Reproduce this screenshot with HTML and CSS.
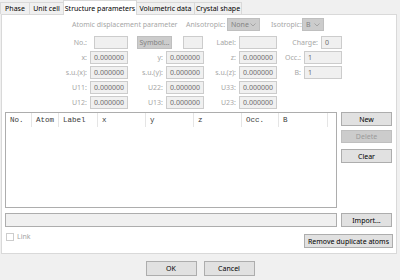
FILE: index.html
```html
<!DOCTYPE html>
<html>
<head>
<meta charset="utf-8">
<link rel="stylesheet" href="styles.css">
</head>
<body>
<div class="dlg">
  <div class="tabs">
    <div class="tab w-phase">Phase</div>
    <div class="tab w-unit">Unit cell</div>
    <div class="tab w-struct active">Structure parameters</div>
    <div class="tab w-vol">Volumetric data</div>
    <div class="tab w-cry">Crystal shape</div>
  </div>
  <div class="panel">
    <div class="adp">
      <span class="dis adp-title">Atomic displacement parameter</span>
      <span class="dis aniso-l">Anisotropic:</span>
      <span class="combo combo-none">None<svg class="chev" width="6" height="4" viewBox="0 0 6 4"><polyline points="0.5,0.5 3,3 5.5,0.5" fill="none" stroke="#9a9a9a" stroke-width="0.8"/></svg></span>
      <span class="dis iso-l">Isotropic:</span>
      <span class="combo combo-b">B<svg class="chev" width="6" height="4" viewBox="0 0 6 4"><polyline points="0.5,0.5 3,3 5.5,0.5" fill="none" stroke="#9a9a9a" stroke-width="0.8"/></svg></span>
    </div>
    <div class="form">
      <span class="lbl">No.:</span>
      <span class="inp inp-no"></span>
      <span class="sym-cell"><span class="btn-dis sym">Symbol...</span><span class="inp inp-small"></span></span>
      <span class="lbl">Label:</span>
      <span class="inp"></span>
      <span class="charge-cell"><span class="lbl-i">Charge:</span><span class="inp inp-charge">0</span></span>

      <span class="lbl">x:</span><span class="inp">0.000000</span>
      <span class="lbl">y:</span><span class="inp">0.000000</span>
      <span class="lbl">z:</span><span class="inp">0.000000</span>
      <span class="lbl">Occ.:</span><span class="inp">1</span>

      <span class="lbl">s.u.(x):</span><span class="inp">0.000000</span>
      <span class="lbl">s.u.(y):</span><span class="inp">0.000000</span>
      <span class="lbl">s.u.(z):</span><span class="inp">0.000000</span>
      <span class="lbl">B:</span><span class="inp">1</span>

      <span class="lbl">U11:</span><span class="inp">0.000000</span>
      <span class="lbl">U22:</span><span class="inp">0.000000</span>
      <span class="lbl">U33:</span><span class="inp">0.000000</span>
      <span></span><span></span>

      <span class="lbl">U12:</span><span class="inp">0.000000</span>
      <span class="lbl">U13:</span><span class="inp">0.000000</span>
      <span class="lbl">U23:</span><span class="inp">0.000000</span>
      <span></span><span></span>
    </div>
    <div class="atoms">
      <div class="table">
        <div class="thead">
          <span class="th c-no">No.</span>
          <span class="th c-atom">Atom</span>
          <span class="th c-label">Label</span>
          <span class="th c-x">x</span>
          <span class="th c-y">y</span>
          <span class="th c-z">z</span>
          <span class="th c-occ">Occ.</span>
          <span class="th c-b">B</span>
        </div>
      </div>
      <div class="side">
        <button class="btn">New</button>
        <button class="btn btn-off b-del">Delete</button>
        <button class="btn b-clear">Clear</button>
      </div>
    </div>
    <div class="import">
      <div class="path"></div>
      <button class="btn b-imp">Import...</button>
    </div>
    <div class="foot">
      <span class="chk"><span class="box"></span><span class="dis">Link</span></span>
      <button class="btn b-rem">Remove duplicate atoms</button>
    </div>
  </div>
  <div class="actions">
    <button class="btn b-ok">OK</button>
    <button class="btn b-ok">Cancel</button>
  </div>
</div>
</body>
</html>
```
FILE: styles.css
```css
* { box-sizing: border-box; }
html, body { margin: 0; padding: 0; }
body {
  background: #f0f0f0;
  font-family: "Noto Sans", "Open Sans", sans-serif;
  font-size: 7px;
  color: #000;
  white-space: nowrap;
}
.dlg { width: 400px; height: 280px; }

.tabs { display: flex; height: 14px; align-items: flex-end; position: relative; z-index: 2; }
.tab {
  height: 12px;
  border: 1px solid #d9d9d9;
  border-bottom: none;
  margin-right: -1px;
  background: #f0f0f0;
  display: flex; align-items: center; justify-content: center;
  line-height: 1;
}
.tab.active { height: 15px; background: #fff; margin-bottom: -1px; position: relative; }
.w-phase { width: 30px; }
.w-unit { width: 35px; }
.w-struct { width: 74px; }
.w-vol { width: 59px; }
.w-cry { width: 48px; }

.panel {
  margin-left: 1px;
  width: 396px;
  height: 240px;
  background: #fff;
  border: 1px solid #d9d9d9;
  padding: 2px 3px 0 3px;
}

.dis { color: #a6a6a6; }

.adp { display: flex; align-items: center; height: 14px; }
.adp-title { margin-left: 67px; width: 102px; text-align: center; }
.aniso-l { margin-left: 12px; width: 40px; }
.iso-l { margin-left: 11px; width: 31px; }
.combo {
  height: 13px;
  background: #cccccc;
  border: 1px solid #bfbfbf;
  color: #838383;
  display: flex; align-items: center;
  padding-left: 3px;
  position: relative;
}
.combo .chev { position: absolute; right: 3px; top: 4px; }
.combo-none { width: 33px; margin-left: 1px; }
.combo-b { width: 22px; }

.form {
  margin-top: 5px;
  display: grid;
  grid-template-columns: 85px 38px 38px 38px 35px 38px 27px 38px;
  grid-auto-rows: 13px;
  row-gap: 2px;
}
.lbl { color: #a6a6a6; text-align: right; padding-right: 3px; display: flex; align-items: center; justify-content: flex-end; }
.inp {
  background: #f0f0f0;
  border: 1px solid #cccccc;
  color: #6d6d6d;
  display: flex; align-items: center;
  padding-left: 3px;
}
.inp-no { margin-left: 4px; }
.sym-cell { grid-column: span 2; display: flex; }
.btn-dis {
  background: #cccccc;
  border: 1px solid #bfbfbf;
  color: #838383;
  display: flex; align-items: center; justify-content: center;
}
.sym { margin-left: 9px; width: 35px; }
.inp-small { margin-left: 11px; width: 20px; }
.charge-cell { grid-column: span 2; display: flex; justify-content: flex-end; }
.lbl-i { color: #a6a6a6; display: flex; align-items: center; padding-right: 3px; }
.inp-charge { width: 21px; }

.atoms { margin-top: 3px; display: flex; align-items: flex-start; }
.table {
  width: 332px;
  height: 96px;
  border: 1px solid #adadad;
  background: #fff;
}
.thead { display: flex; height: 14px; font-family: "Liberation Mono", monospace; font-size: 7.5px; color: #3a3a3a; }
.th {
  border-right: 1px solid #e5e5e5;
  display: flex; align-items: center;
  padding-left: 4px;
}
.c-no { width: 26px; }
.c-atom { width: 27px; }
.c-label { width: 39px; }
.c-x { width: 48px; }
.c-y { width: 48px; }
.c-z { width: 48px; }
.c-occ { width: 37px; }
.c-b { width: 49px; }

.side { display: flex; flex-direction: column; margin-left: 4px; }
.btn {
  font-family: "Noto Sans", "Open Sans", sans-serif;
  font-size: 7px;
  color: #000;
  background: #e1e1e1;
  border: 1px solid #adadad;
  width: 51px;
  height: 14px;
  padding: 0;
  margin: 0;
  display: flex; align-items: center; justify-content: center;
  white-space: nowrap;
}
.btn-off { background: #cccccc; border-color: #bfbfbf; color: #9a9a9a; }
.b-del { margin-top: 4px; height: 13px; }
.b-clear { margin-top: 6px; }

.import { margin-top: 5px; display: flex; }
.path { width: 332px; height: 14px; background: #f0f0f0; border: 1px solid #adadad; }
.b-imp { margin-left: 4px; }

.foot { margin-top: 5px; display: flex; justify-content: space-between; align-items: flex-start; }
.chk { display: flex; align-items: center; margin-left: 1px; }
.box { width: 8px; height: 8px; border: 1px solid #cccccc; background: #fff; margin-right: 3px; }
.b-rem { width: 89px; margin-top: 2px; }

.actions { display: flex; justify-content: center; gap: 7px; margin-top: 7px; }
.b-ok { width: 51px; height: 15px; }
```
